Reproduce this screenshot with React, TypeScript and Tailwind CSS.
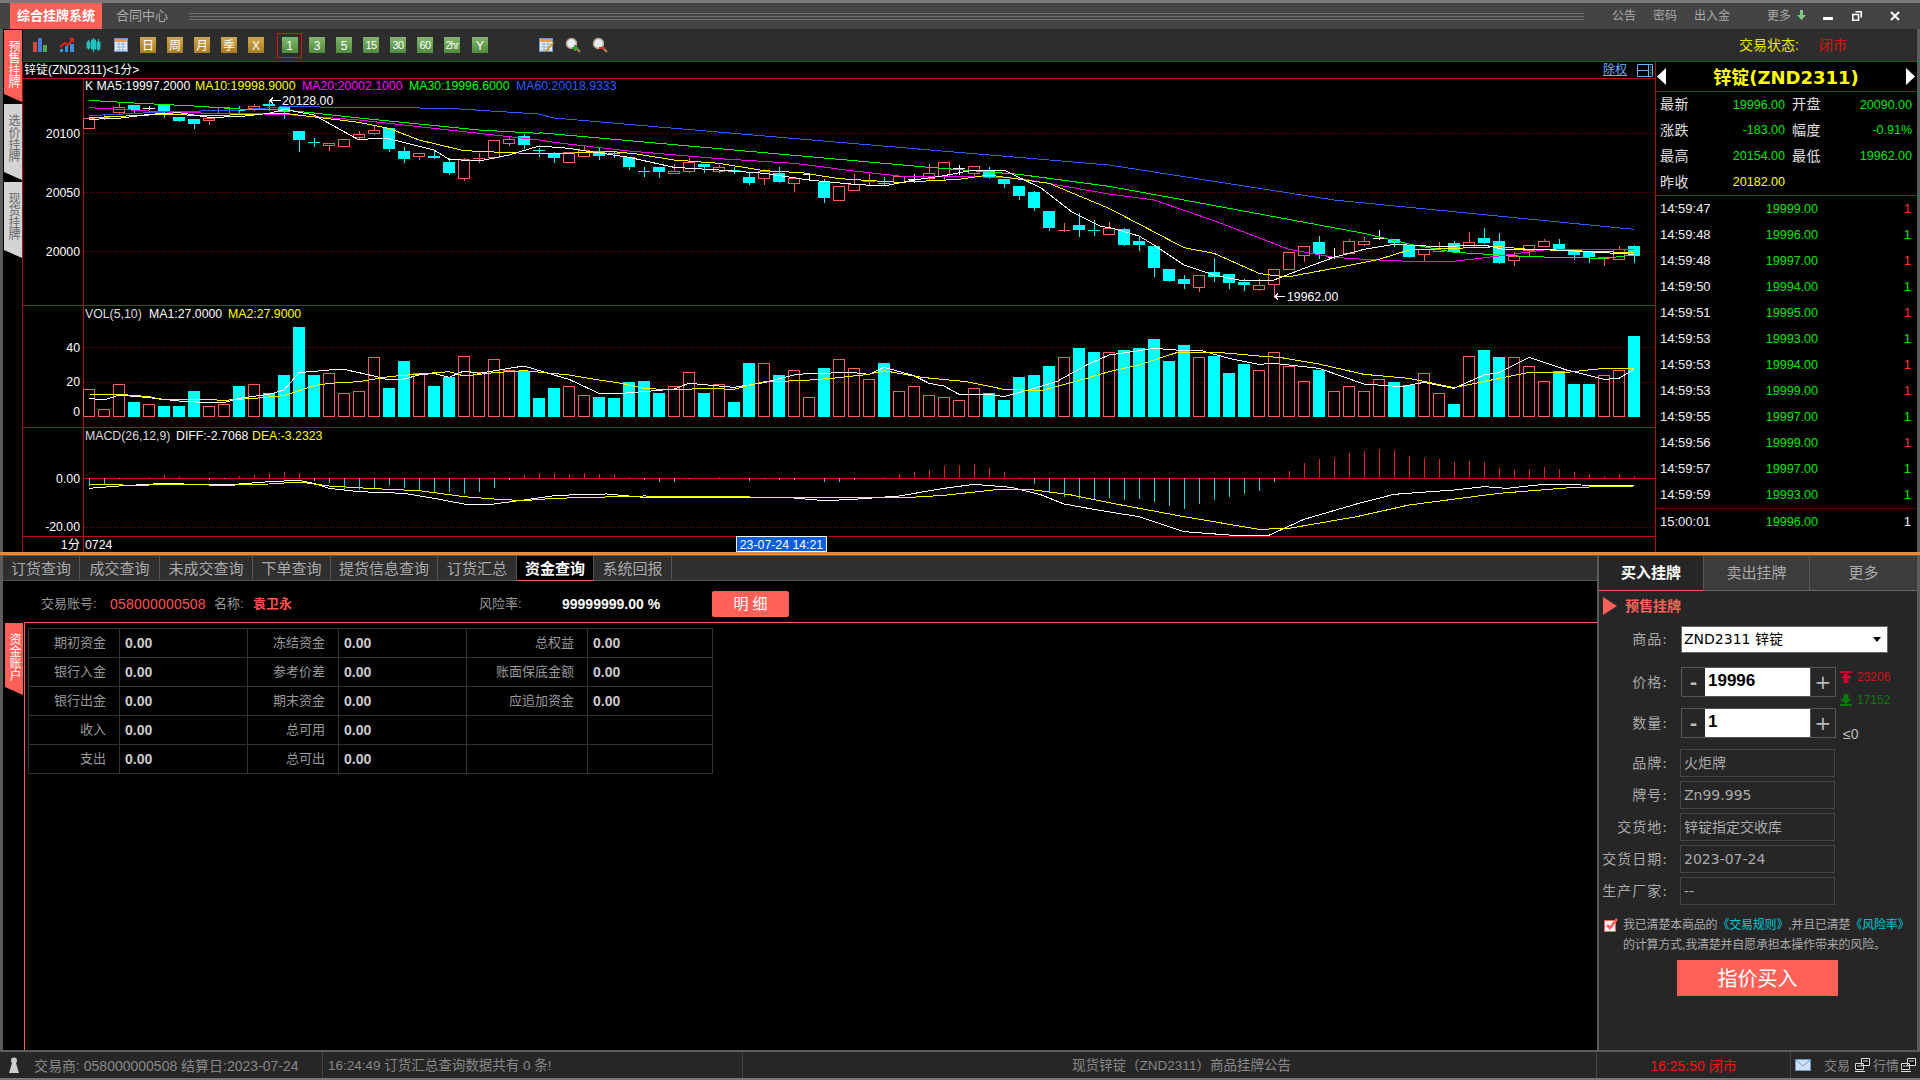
const RED = "#ff5f5f";
const CYAN = "#00ffff";
const GRID = "#b01010";

// [kind, bodyTop, bodyBottom, wickTop, wickBottom], absolute y
const candles: [string, number, number, number, number][] = [
  ["r",118,128,118,128],["r",117,117,115,119],["r",107,112,103,113],["c",105,110,105,113],["w",108,108,106,109],
  ["c",105,111,105,117],["c",117,121,117,121],["c",119,124,119,128],["r",118,120,118,124],["r",107,113,107,113],
  ["c",110,110,106,114],["r",106,108,104,110],["c",104,106,101,110],["c",107,112,107,118],["c",131,140,131,151],
  ["c",142,142,138,146],["r",143,145,143,150],["r",139,146,139,146],["r",134,137,131,138],["r",130,133,126,134],
  ["c",128,149,128,151],["c",151,159,147,162],["r",153,156,153,159],["c",156,158,150,158],["c",162,173,158,174],
  ["r",159,178,158,180],["r",158,158,153,162],["r",140,157,140,158],["r",139,143,136,145],["c",136,145,134,148],
  ["c",150,150,148,156],["c",154,158,152,162],["r",152,162,152,162],["r",150,156,146,156],["c",151,156,147,159],
  ["c",153,153,151,157],["c",157,167,157,169],["c",171,171,167,176],["c",167,172,167,177],["r",171,173,164,173],
  ["r",162,171,158,172],["c",164,167,164,172],["r",167,171,165,172],["c",170,172,167,173],["c",177,183,173,184],
  ["r",171,178,169,184],["c",173,182,167,182],["r",178,183,177,191],["w",174,174,174,179],["c",182,198,179,202],
  ["r",186,200,186,200],["r",184,190,174,190],["r",181,181,174,184],["c",183,184,177,185],["r",176,182,176,182],
  ["w",179,179,174,182],["r",173,178,164,179],["r",162,176,162,179],["w",168,168,165,174],["r",166,173,166,177],
  ["c",170,178,167,178],["c",179,184,179,187],["c",186,196,186,199],["c",192,208,191,210],["c",211,228,211,230],
  ["r",230,230,223,231],["c",225,230,213,236],["c",230,230,220,235],["r",228,234,222,234],["c",229,245,228,245],
  ["c",241,245,237,250],["c",246,268,246,276],["c",269,281,269,281],["c",279,284,275,288],["r",275,287,275,291],
  ["c",272,277,258,281],["c",274,283,274,288],["c",282,285,279,290],["r",285,289,279,290],["r",269,284,269,297],
  ["r",252,269,252,269],["r",246,255,246,261],["c",242,254,236,258],["w",257,257,248,258],["r",241,253,239,253],
  ["r",241,244,237,245],["w",238,238,230,239],["c",239,243,239,246],["c",245,257,245,257],["r",249,254,249,261],
  ["r",248,251,242,251],["c",243,252,241,252],["r",242,247,232,247],["c",238,243,228,243],["c",241,263,233,263],
  ["r",256,260,252,265],["r",245,250,245,255],["r",241,246,239,246],["c",244,249,239,249],["c",250,255,250,259],
  ["c",251,257,251,262],["r",257,258,257,265],["r",249,259,246,259],["c",246,256,245,262],
];

// bar tops in zoom units; negative = hollow red, positive = solid cyan
const volA = [-268,-328,-253,306,-313,318,318,273,-319,-313,258,-253,279,225,81,225,-220,-280,-274,-172,264,183,-220,258,232,-169,-217,-178,-210,214,294,264];
const volB = [-919,-946,951,954,906,903,939,-919,-877,939,-913,966,849,-850,885,-871,-952,864,-838,-865,-898,849,-934,-919,-946,-952,-961,-925,939,960,891,885,858,-832,804,816,-817];
const volC = [450,444,417,483,435,-472,468,519,492,-511,-457,-499,-544,510,-574,-559,-574,-538,546,556,-520,-580,612,-469,450,471,-472,-499,-544,514,552,552,-526,-511,408];
const vols = [
  ...volA.map((v) => [v > 0, 300 + Math.abs(v) / 3] as const),
  ...volB.map((v) => [v > 0, 80 + Math.abs(v) / 3] as const),
  ...volC.map((v) => [v > 0, 200 + Math.abs(v) / 3] as const),
];

const macd = [
  -8,-6,-1,0,1,3,2,0,-2,-1, 2,3,5,6,5,-3,-5,-12,-12,-10, -7,-10,-13,-14,-14,-16,-14,-10,-2,3,
  5,5,4,5,4,4,1,-2,-4,-4, -1,0,1,0,-3,-1,-2,-2,0,-4, -4,-2,0,1,4,6,8,12,13,14,
  10,6,1,-6,-15,-19,-21,-22,-20,-22, -21,-24,-28,-31,-26,-22,-19,-16,-13,-4,
  7,15,19,20,25,27,29,28,22,20, 19,16,17,16,10,8,9,11,9,6, 4,2,4,2,
];

const pts = (base: number, list: number[][]) =>
  list.map(([i, v]) => `${89 + 15 * i},${base + v / 3}`).join(" ");

const maLines = [
  { color: "#2a5cff", points: [
    pts(60, [[0,167],[5,156],[10,150],[13,140],[20,143],[24,145],[30,162]]),
    pts(80, [[31,114],[50,187],[68,255]]),
    pts(200, [[83,0],[103,88]]) ].join(" ") },
  { color: "#00ff00", points: [
    pts(60, [[0,121],[3,129],[7,138],[10,147],[13,150],[15,159],[18,174],[20,183],[26,210],[30,220]]),
    pts(80, [[30,158],[56,262],[62,283],[68,319]]),
    pts(200, [[73,0],[85,100],[88,132],[91,157],[96,170],[101,175],[103,165]]) ].join(" ") },
  { color: "#ff00ff", points: [
    pts(60, [[0,143],[6,158],[13,163],[18,180],[23,205],[27,225],[30,240]]),
    pts(80, [[31,187],[36,213],[42,236],[47,250],[51,273],[54,288],[59,290],[62,295],[68,342]]),
    pts(200, [[71,0],[75,62],[80,148],[83,172],[85,178],[88,184],[91,184],[94,168],[97,150],[103,148]]) ].join(" ") },
  { color: "#ffff00", points: [
    pts(60, [[0,173],[5,163],[8,167],[13,160],[18,187],[20,205],[22,240],[25,272],[28,278],[30,281]]),
    pts(80, [[31,221],[35,215],[36.5,222],[39,240],[42,250],[45,272],[47.5,278],[50,296],[54,307],[58,298],[60,285],[64,310],[68,385]]),
    pts(200, [[70,72],[73,143],[75,160],[78,220],[79,227],[80,230],[83,205],[86,178],[88,150],[91,145],[94,140],[96,148],[103,158]]) ].join(" ") },
  { color: "#ffffff", points: [
    pts(60, [[0,178],[2,175],[4,163],[6,158],[8,172],[10,170],[12,160],[13,148],[15,165],[18,240],[19,235],[20,236],[23,270],[24,298],[26,303],[28,285],[30,258],[32,265]]),
    pts(80, [[33,212],[36,232],[39,262],[42,270],[45,280],[48,300],[51,313],[53,318],[55,300],[57,287],[59,270],[61,270],[63.5,325],[65.5,395],[67.5,440]]),
    pts(200, [[68,82],[70,108],[71,135],[73,195],[75,225],[77,243],[79,240],[81,205],[83,172],[85,148],[87,133],[90,140],[93,135],[94.5,150],[97,148],[101,158],[103,163]]) ].join(" ") },
];

const volLines = [
  { color: "#ffffff", points: [
    pts(300, [[0,295],[1,300],[2,285],[4,293],[6,303],[8,308],[9,308],[10,295],[12,283],[13,270],[14,218],[16,210],[17,208],[19,228],[20,240],[21,237],[22,225],[23,220],[24,232],[25,213],[26,220],[28,205],[29,198],[31,225],[32,238]]),
    pts(80, [[34,940],[35.5,940],[37,935],[39,927],[40,910],[43,922],[45,908],[47,885],[48,880],[51,878],[52,883],[53,862],[55,887],[56,910],[57,918],[58,943],[60,943],[61,950],[63,925],[64.5,905],[66.5,855],[68,825]]),
    pts(200, [[70,452],[71,445],[73,452],[74,450],[76,475],[78,493],[79,490],[82,505],[85,552],[87.5,560],[89,547],[91,565],[93,525],[94,518],[96,472],[98.5,510],[101,538],[102,535],[103,508]]) ].join(" ") },
  { color: "#ffff00", points: [
    pts(300, [[0,282],[2,283],[4,290],[5,300],[7,297],[9,301],[11,295],[13,287],[15,257],[16,250],[18,245],[20,230],[22,222],[24,215],[25,228],[27,218],[29,212],[32,225]]),
    pts(80, [[34,900],[35.5,910],[37,925],[39,930],[41,925],[43,928],[45,905],[47.5,902],[49.5,895],[52,883],[53,872],[55.5,892],[58.5,905],[61,928],[63.5,932],[66.5,895],[68,875]]),
    pts(200, [[70,495],[72.5,458],[75.5,458],[78,468],[79.5,473],[82,492],[85,523],[88,535],[91,563],[96,517],[98.5,517],[101,505],[103,505]]) ].join(" ") },
];

const macdLines = [
  { color: "#ffffff", points: [
    pts(300, [[0,565],[2,558],[5,550],[7,553],[10,552],[12,545],[14,541],[15,550],[16,565],[18,575],[21,580],[23,595],[25,612],[27,612],[29,600],[31,587]]),
    pts(80, [[33,1243],[34.5,1242],[37,1252],[40,1253],[44,1252],[47,1254],[49,1262],[51,1258],[54,1248],[57,1225],[59,1213],[61.5,1222],[63.5,1245],[65,1272],[67.5,1292]]),
    pts(200, [[70,950],[73,995],[76,1005],[78.7,1005],[81,958],[84.5,912],[87,883],[91,870],[93,860],[94.5,865],[97,853],[99.5,855],[103,858]]) ].join(" ") },
  { color: "#ffff00", points: [
    pts(300, [[0,552],[3,556],[6,553],[9,556],[12,552],[14,546],[16,558],[19,566],[22,572],[25,590],[27,597],[29,602],[31,595]]),
    pts(80, [[37,1248],[42,1250],[48,1253],[54,1254],[57,1246],[60.5,1229],[63,1230],[65.5,1245],[68,1268]]),
    pts(200, [[73,950],[78,988],[80,985],[84.5,950],[88,915],[94,880],[99,862],[103,858]]) ].join(" ") },
];

function KChart() {
  return (
    <svg width={1633} height={473} viewBox="23 79 1633 473" className="block">
      {[133, 192, 251, 347, 382, 527].map((y) => (
        <line key={y} x1={84} x2={1656} y1={y + 0.5} y2={y + 0.5} stroke="#a00000" strokeDasharray="1 2" />
      ))}
      <g shapeRendering="crispEdges">
        {[305, 427, 536].map((y) => (
          <line key={y} x1={23} x2={1656} y1={y + 0.5} y2={y + 0.5} stroke={GRID} />
        ))}
        <line x1={83.5} x2={83.5} y1={79} y2={552} stroke={GRID} />
        <line x1={84} x2={1656} y1={478.5} y2={478.5} stroke="#d00000" />

        {candles.map(([k, top, bot, wt, wb], i) => {
          const c = 89 + 15 * i;
          const col = k === "r" ? RED : k === "c" ? CYAN : "#ffffff";
          return (
            <g key={i}>
              <line x1={c + 0.5} x2={c + 0.5} y1={wt} y2={wb + 1} stroke={col} />
              {top === bot ? (
                <line x1={c - 6} x2={c + 6} y1={top + 0.5} y2={top + 0.5} stroke={col} />
              ) : k === "c" ? (
                <rect x={c - 6} y={top} width={12} height={bot - top} fill={CYAN} />
              ) : (
                <rect x={c - 5.5} y={top + 0.5} width={11} height={bot - top} fill="#000" stroke={RED} />
              )}
            </g>
          );
        })}
        {maLines.map((l) => (
          <polyline key={l.color} points={l.points} fill="none" stroke={l.color} />
        ))}

        {vols.map(([solid, top], i) => {
          const c = 89 + 15 * i;
          return solid ? (
            <rect key={i} x={c - 6} y={top} width={12} height={417 - top} fill={CYAN} />
          ) : (
            <rect key={i} x={c - 5.5} y={top + 0.5} width={11} height={416 - top} fill="none" stroke={RED} />
          );
        })}
        {volLines.map((l) => (
          <polyline key={l.color} points={l.points} fill="none" stroke={l.color} />
        ))}

        {macd.map((v, i) => {
          if (v === 0) return null;
          const c = 89 + 15 * i + 0.5;
          return <line key={i} x1={c} x2={c} y1={478} y2={478 - v} stroke={v > 0 ? "#e02020" : "#20d0d8"} />;
        })}
        {macdLines.map((l) => (
          <polyline key={l.color} points={l.points} fill="none" stroke={l.color} />
        ))}

        <path d="M270 100.5h11M273 97.5l-3 3 3 3" fill="none" stroke="#fff" />
        <path d="M1275 296.5h10M1278 293.5l-3 3 3 3" fill="none" stroke="#fff" />
        <rect x={736.5} y={536.5} width={90} height={15} fill="#0a5ce0" stroke="#fff" />
      </g>

      <g className="text-[12.3px]" dominantBaseline="central">
        <text x={85} y={86} fill="#fff">K MA5:19997.2000</text>
        <text x={195} y={86} fill="#ffff00">MA10:19998.9000</text>
        <text x={302} y={86} fill="#ff00ff">MA20:20002.1000</text>
        <text x={409} y={86} fill="#00ff00">MA30:19996.6000</text>
        <text x={516} y={86} fill="#2a5cff">MA60:20018.9333</text>
        <text x={85} y={314} fill="#ddd">VOL(5,10)</text>
        <text x={149} y={314} fill="#fff">MA1:27.0000</text>
        <text x={228} y={314} fill="#ffff00">MA2:27.9000</text>
        <text x={85} y={436} fill="#ddd">MACD(26,12,9)</text>
        <text x={176} y={436} fill="#fff">DIFF:-2.7068</text>
        <text x={252} y={436} fill="#ffff00">DEA:-3.2323</text>
        <text x={282} y={101} fill="#fff">20128.00</text>
        <text x={1287} y={297} fill="#fff">19962.00</text>
        <text x={85} y={545} fill="#fff">0724</text>
        <text x={781.5} y={545} fill="#fff" textAnchor="middle">23-07-24 14:21</text>
        <g textAnchor="end" fill="#fff">
          <text x={80} y={134}>20100</text>
          <text x={80} y={193}>20050</text>
          <text x={80} y={252}>20000</text>
          <text x={80} y={348}>40</text>
          <text x={80} y={382}>20</text>
          <text x={80} y={412}>0</text>
          <text x={80} y={479}>0.00</text>
          <text x={80} y={527}>-20.00</text>
          <text x={80} y={545}>1分</text>
        </g>
      </g>
    </svg>
  );
}

function BarsIcon() {
  return (
    <svg width={16} height={16} viewBox="0 0 16 16">
      <rect x={1} y={5} width={4} height={10} fill="#d84a3a" />
      <rect x={6} y={1} width={4} height={14} fill="#4a78d8" />
      <rect x={11} y={8} width={4} height={7} fill="#4ea84a" />
    </svg>
  );
}

function TrendIcon() {
  return (
    <svg width={16} height={16} viewBox="0 0 16 16">
      <path d="M1 15v-3h3v3zM6 15V9h3v6zM11 15V7h4v8z" fill="#3a90e0" />
      <path d="M1 10l5-4 3 2 5-6" fill="none" stroke="#f02020" strokeWidth={2} />
      <path d="M10 1h5v5z" fill="#f02020" />
    </svg>
  );
}

function CandleIcon() {
  return (
    <svg width={16} height={16} viewBox="0 0 16 16" fill="#20c0c0" stroke="#20c0c0">
      <path d="M2.5 3v10M7.5 1v14M12.5 2v12" fill="none" />
      <rect x={1} y={5} width={3} height={6} />
      <rect x={5.5} y={3} width={4} height={9} />
      <rect x={11} y={5} width={3} height={7} />
    </svg>
  );
}

function CalIcon({ pencil }: { pencil?: boolean }) {
  return (
    <svg width={16} height={16} viewBox="0 0 16 16">
      <rect x={1.5} y={1.5} width={13} height={13} fill="#eef4fb" stroke="#6f94c8" />
      <rect x={2} y={2} width={12} height={3} fill="#e89a50" />
      <path d="M3 7h10M3 10h10M3 13h10M6 5v9M10 5v9" stroke="#8fb0d8" />
      {pencil && <path d="M15 5l1 1-7 8-2 1 1-2z" fill="#e8b030" stroke="#a06a10" strokeWidth={0.5} />}
    </svg>
  );
}

function ZoomIcon({ plus }: { plus?: boolean }) {
  return (
    <svg width={16} height={16} viewBox="0 0 16 16">
      <circle cx={6.5} cy={6.5} r={5} fill="#e8eef4" stroke="#b8a890" strokeWidth={1.5} />
      <path d="M10 10l5 5" stroke="#b08a50" strokeWidth={2} />
      <path d={plus ? "M7 11h6M10 8v6" : "M7 11h6"} stroke={plus ? "#30a030" : "#d83030"} strokeWidth={2} />
    </svg>
  );
}

function PeriodBtn({ text, gold, size }: { text: string; gold?: boolean; size?: string }) {
  return (
    <div
      className={`w-[16px] h-[16px] shrink-0 flex items-center justify-center text-white border-t border-[#ffffff50] bg-linear-to-b ${
        gold ? "from-[#d0a445] to-[#a87c22]" : "from-[#7fb568] to-[#4f8a3e]"
      } ${size ?? "text-[12px]"}`}
    >
      {text}
    </div>
  );
}

function SideTab({ text, active, h }: { text: string; active?: boolean; h: string }) {
  return (
    <div
      className={`w-[18px] ${h} ml-[1px] flex items-center pt-[10px] text-[12px] leading-[12px] [writing-mode:vertical-rl] [clip-path:polygon(0_0,100%_0,100%_100%,0_calc(100%-8px))] ${
        active ? "bg-[#ff6159] text-white" : "bg-[#d4d4d4] text-[#666]"
      }`}
    >
      {text}
    </div>
  );
}

const stats = [
  ["最新", "19996.00", "开盘", "20090.00"],
  ["涨跌", "-183.00", "幅度", "-0.91%"],
  ["最高", "20154.00", "最低", "19962.00"],
];

const ticks = [
  ["14:59:47", "19999.00", "r"],
  ["14:59:48", "19996.00", "g"],
  ["14:59:48", "19997.00", "r"],
  ["14:59:50", "19994.00", "g"],
  ["14:59:51", "19995.00", "r"],
  ["14:59:53", "19993.00", "g"],
  ["14:59:53", "19994.00", "r"],
  ["14:59:53", "19999.00", "r"],
  ["14:59:55", "19997.00", "g"],
  ["14:59:56", "19999.00", "r"],
  ["14:59:57", "19997.00", "g"],
  ["14:59:59", "19993.00", "g"],
];

function TickRow({ t, muted }: { t: string[]; muted?: boolean }) {
  return (
    <div className="h-[26px] flex items-center pl-[4px] text-[13px]">
      <span className="w-[89px] text-[#f0f0f0]">{t[0]}</span>
      <span className="w-[69px] text-right text-[#00e600] text-[12.5px]">{t[1]}</span>
      <span
        className={`w-[93px] text-right ${
          muted ? "text-[#f0f0f0]" : t[2] === "r" ? "text-[#ff3030]" : "text-[#00e600]"
        }`}
      >
        1
      </span>
    </div>
  );
}

function InfoPanel() {
  return (
    <div className="w-[261px] border-l border-[#b01010] bg-black flex flex-col">
      <div className="h-[30px] border-b border-[#b01010] flex items-center justify-between px-[1px]">
        <svg width={10} height={17} viewBox="0 0 10 17"><path d="M9 0v17L0 8.5z" fill="#fff" /></svg>
        <span className="pt-[2px] [font-family:'DejaVu_Sans','Noto_Sans_CJK_SC',sans-serif] font-bold text-[18px] text-[#ffff00]">
          锌锭(ZND2311)
        </span>
        <svg width={10} height={17} viewBox="0 0 10 17"><path d="M1 0v17l9-8.5z" fill="#fff" /></svg>
      </div>
      <div className="h-[104px] border-b border-[#b01010] flex flex-col">
        {stats.map((s) => (
          <div key={s[0]} className="h-[26px] flex items-center pl-[4px]">
            <span className="w-[29px] text-[14px] tracking-[0.5px] text-[#e0e0e0] whitespace-nowrap">{s[0]}</span>
            <span className="w-[96px] text-right text-[12.5px] text-[#00e600]">{s[1]}</span>
            <span className="w-[29px] ml-[7px] text-[14px] tracking-[0.5px] text-[#e0e0e0] whitespace-nowrap">{s[2]}</span>
            <span className="w-[91px] text-right text-[12.5px] text-[#00e600]">{s[3]}</span>
          </div>
        ))}
        <div className="h-[26px] flex items-center pl-[4px]">
          <span className="w-[29px] text-[14px] tracking-[0.5px] text-[#e0e0e0] whitespace-nowrap">昨收</span>
          <span className="w-[96px] text-right text-[12.5px] text-[#ffff00]">20182.00</span>
        </div>
      </div>
      {ticks.map((t, i) => (
        <TickRow key={i} t={t} />
      ))}
      <div className="border-t border-dotted border-[#a00000]" />
      <TickRow t={["15:00:01", "19996.00", "w"]} muted />
    </div>
  );
}

function Toolbar() {
  const twoDigit = "text-[11px] tracking-[-0.5px]";
  return (
    <div className="h-[32px] bg-[#2d2d2d] flex items-center pl-[9px]">
      <div className="flex items-center gap-[11px]">
        <BarsIcon />
        <TrendIcon />
        <CandleIcon />
        <CalIcon />
        {["日", "周", "月", "季", "X"].map((t) => (
          <PeriodBtn key={t} text={t} gold />
        ))}
      </div>
      <div className="ml-[13px] w-[25px] h-[25px] border border-[#e01010] flex items-center justify-center">
        <PeriodBtn text="1" />
      </div>
      <div className="ml-[7px] flex items-center gap-[11px]">
        <PeriodBtn text="3" />
        <PeriodBtn text="5" />
        <PeriodBtn text="15" size={twoDigit} />
        <PeriodBtn text="30" size={twoDigit} />
        <PeriodBtn text="60" size={twoDigit} />
        <PeriodBtn text="2hr" size="text-[10px] tracking-[-0.5px]" />
      </div>
      <div className="ml-[12px]">
        <PeriodBtn text="Y" />
      </div>
      <div className="ml-[50px] flex items-center gap-[11px]">
        <CalIcon pencil />
        <ZoomIcon plus />
        <ZoomIcon />
      </div>
      <span className="ml-[1131px] text-[14px] text-[#e8e800] whitespace-nowrap">交易状态:</span>
      <span className="ml-[20px] text-[14px] text-[#e01010]">闭市</span>
    </div>
  );
}

function TitleBar() {
  return (
    <div className="h-[29px] shrink-0 border-t-[3px] border-[#7a7a7a] bg-[#444] flex items-center text-[12px] text-[#aaa]">
      <div className="ml-[10px] w-[92px] h-full bg-[#ff6159] text-white font-bold text-[13px] flex items-center justify-center whitespace-nowrap">
        综合挂牌系统
      </div>
      <span className="ml-[14px] w-[52px] text-[13px] whitespace-nowrap">合同中心</span>
      <div className="ml-[21px] w-[1395px] flex flex-col gap-[2px]">
        <div className="h-px bg-[#707070]" />
        <div className="h-px bg-[#707070]" />
        <div className="h-px bg-[#707070]" />
      </div>
      <span className="ml-[28px] whitespace-nowrap">公告</span>
      <span className="ml-[17px] whitespace-nowrap">密码</span>
      <span className="ml-[17px] whitespace-nowrap">出入金</span>
      <span className="ml-[37px] whitespace-nowrap">更多</span>
      <svg className="ml-[6px] -mt-[3px]" width={9} height={10} viewBox="0 0 9 10"><path d="M3 0h3v5h3l-4.500 5L0 5h3z" fill="#7fc87f" /></svg>
      <svg className="ml-[17px]" width={10} height={10} viewBox="0 0 10 10"><rect y={6} width={10} height={3} fill="#fff" /></svg>
      <svg className="ml-[19px]" width={10} height={10} viewBox="0 0 10 10"><path d="M3.500.8h5.700v5.700M.8 3.500h5.700v5.700H.8z" fill="none" stroke="#fff" strokeWidth={1.600} /></svg>
      <svg className="ml-[28px]" width={10} height={10} viewBox="0 0 10 10"><path d="M1 1l8 8M9 1l-8 8" stroke="#fff" strokeWidth={2} /></svg>
    </div>
  );
}

function UpperSection() {
  return (
    <div className="h-[523px] shrink-0 mx-[3px] flex">
      <div className="w-[20px] bg-black flex flex-col gap-[2px] pt-[1px]">
        <SideTab text="预售挂牌" active h="h-[72px]" />
        <SideTab text="选价挂牌" h="h-[76px]" />
        <SideTab text="现货挂牌" h="h-[76px]" />
      </div>
      <div className="flex-1 flex flex-col">
        <Toolbar />
        <div className="flex-1 flex border-t border-[#b01010] bg-black">
          <div className="w-[1633px] border-l border-[#a01010] -ml-px">
            <div className="h-[17px] border-b border-[#b01010] flex items-center text-[12px] text-white pl-[1px]">
              <span className="whitespace-nowrap">锌锭(ZND2311)&lt;1分&gt;</span>
              <span className="ml-auto underline text-[#70b0ff]">除权</span>
              <svg className="ml-[10px] mr-[2px]" width={16} height={13} viewBox="0 0 16 13">
                <path d="M.5.5h15v12H.5zM.5 6.500h11M11.500.5v12M13 3h1.500M13 6h1.500M13 9h1.500" fill="none" stroke="#70b0ff" />
              </svg>
            </div>
            <KChart />
          </div>
          <InfoPanel />
        </div>
      </div>
    </div>
  );
}

const queryTabs = [
  ["订货查询", "w-[77px]"],
  ["成交查询", "w-[80px]"],
  ["未成交查询", "w-[93px]"],
  ["下单查询", "w-[78px]"],
  ["提货信息查询", "w-[107px]"],
  ["订货汇总", "w-[79px]"],
  ["资金查询", "w-[77px]"],
  ["系统回报", "w-[78px]"],
];

const fundRows = [
  ["期初资金", "0.00", "冻结资金", "0.00", "总权益", "0.00"],
  ["银行入金", "0.00", "参考价差", "0.00", "账面保底金额", "0.00"],
  ["银行出金", "0.00", "期末资金", "0.00", "应追加资金", "0.00"],
  ["收入", "0.00", "总可用", "0.00", "", ""],
  ["支出", "0.00", "总可出", "0.00", "", ""],
];

function FundsPanel() {
  const lbl = "border border-[#333] text-right pr-[13px] text-[13px] text-[#999]";
  const val = "border border-[#333] pl-[5px] text-[14px] font-bold text-[#ccc]";
  return (
    <div className="w-[1594px] bg-black flex flex-col">
      <div className="h-[25px] bg-[#2f2f2f] border-b border-[#555] flex text-[15px] text-[#aaa]">
        {queryTabs.map(([t, w]) => (
          <div
            key={t}
            className={`${w} h-[25px] shrink-0 flex items-center justify-center pt-[2px] whitespace-nowrap border-r border-[#555] ${
              t === "资金查询" ? "bg-black text-white font-bold border-b border-b-[#ff6159]" : ""
            }`}
          >
            {t}
          </div>
        ))}
      </div>
      <div className="h-[41px] flex items-center pl-[38px] pt-[5px] text-[13px] text-[#999]">
        <span className="w-[69px] whitespace-nowrap">交易账号:</span>
        <span className="w-[104px] text-[14px] tracking-[0.2px] text-[#ff5050]">058000000508</span>
        <span className="w-[39px] whitespace-nowrap">名称:</span>
        <span className="w-[226px] text-[#ff5050] font-bold">袁卫永</span>
        <span className="w-[83px] whitespace-nowrap">风险率:</span>
        <span className="w-[150px] text-[14px] font-bold text-white whitespace-nowrap">99999999.00 %</span>
        <button className="w-[77px] h-[26px] rounded-[2px] bg-[#ff6159] text-white text-[15px]">明 细</button>
      </div>
      <div className="flex-1 flex">
        <div className="w-[21px] pt-[1px] pl-[2px]">
          <div className="w-[18px] h-[72px] bg-[#ff6159] text-white text-[12px] leading-[12px] flex items-center pt-[10px] [writing-mode:vertical-rl] [clip-path:polygon(0_0,100%_0,100%_100%,0_calc(100%-8px))]">
            资金账户
          </div>
        </div>
        <div className="flex-1 border-l border-t border-[#ff6159] pl-[3px] pt-[5px]">
          <table className="table-fixed w-[684px] border-collapse">
            <colgroup>
              <col className="w-[91px]" />
              <col className="w-[128px]" />
              <col className="w-[91px]" />
              <col className="w-[128px]" />
              <col className="w-[121px]" />
              <col className="w-[125px]" />
            </colgroup>
            <tbody>
              {fundRows.map((r) => (
                <tr key={r[0]} className="h-[29px]">
                  <td className={lbl}>{r[0]}</td>
                  <td className={val}>{r[1]}</td>
                  <td className={lbl}>{r[2]}</td>
                  <td className={val}>{r[3]}</td>
                  <td className={lbl}>{r[4]}</td>
                  <td className={val}>{r[5]}</td>
                </tr>
              ))}
            </tbody>
          </table>
        </div>
      </div>
    </div>
  );
}

function Stepper({ value }: { value: string }) {
  return (
    <div className="w-[155px] h-[30px] border border-[#555] flex text-[#bbb]">
      <div className="w-[23px] flex items-center justify-center text-[18px] font-bold">-</div>
      <div className="w-[105px] bg-white text-black text-[17px] font-bold pl-[3px] leading-[26px] [font-family:'Liberation_Sans',sans-serif]">
        {value}
      </div>
      <div className="flex-1 flex items-center justify-center text-[20px] border-l border-[#555]">+</div>
    </div>
  );
}

function FieldRow({ label, value }: { label: string; value: string }) {
  return (
    <div className="h-[28px] mb-[4px] flex items-center">
      <span className="w-[69px] text-right text-[14px] tracking-[1px] text-[#aaa] whitespace-nowrap">{label}:</span>
      <div className="ml-[12px] w-[155px] h-[28px] border border-[#444] flex items-center pl-[3px] text-[14px] text-[#aaa] whitespace-nowrap">
        {value}
      </div>
    </div>
  );
}

function BuyPanel() {
  const lbl = "w-[69px] text-right text-[14px] tracking-[1px] text-[#aaa] whitespace-nowrap";
  return (
    <div className="w-[318px] bg-[#262626] flex flex-col [font-family:'DejaVu_Sans','Noto_Sans_CJK_SC',sans-serif]">
      <div className="h-[35px] shrink-0 flex text-[15px] text-[#aaa] [font-family:'Liberation_Sans','Noto_Sans_CJK_SC',sans-serif]">
        <div className="w-[105px] flex items-center justify-center font-bold text-white border-b border-[#ff6159] border-r border-r-[#555]">买入挂牌</div>
        <div className="w-[106px] flex items-center justify-center bg-[#3c3c3c] border-b border-[#666] border-r border-r-[#555]">卖出挂牌</div>
        <div className="flex-1 flex items-center justify-center bg-[#3c3c3c] border-b border-[#666]">更多</div>
      </div>
      <div className="h-[30px] shrink-0 flex items-center pl-[4px]">
        <svg width={14} height={18} viewBox="0 0 14 18"><path d="M0 0l14 9-14 9z" fill="#ff6159" /></svg>
        <span className="ml-[8px] -mt-[2px] text-[14px] font-bold text-[#ff6159] [font-family:'Noto_Sans_CJK_SC',sans-serif]">预售挂牌</span>
      </div>
      <div className="mt-[5px] h-[27px] flex items-center">
        <span className={lbl}>商品:</span>
        <div className="ml-[13px] w-[207px] h-[27px] bg-white border border-[#666] flex items-center pl-[2px] pr-[6px] text-[14px] text-black whitespace-nowrap">
          ZND2311 锌锭
          <svg className="ml-auto" width={8} height={5} viewBox="0 0 8 5"><path d="M0 0h8L4 5z" fill="#000" /></svg>
        </div>
      </div>
      <div className="mt-[14px] h-[71px] flex">
        <div className="flex flex-col gap-[11px]">
          <div className="flex items-center">
            <span className={lbl}>价格:</span>
            <div className="ml-[13px]"><Stepper value="19996" /></div>
          </div>
          <div className="flex items-center">
            <span className={lbl}>数量:</span>
            <div className="ml-[13px]"><Stepper value="1" /></div>
          </div>
        </div>
        <div className="ml-[4px] flex flex-col text-[12px] [font-family:'Liberation_Sans',sans-serif]">
          <div className="h-[20px] mt-[1px] flex items-center gap-[5px] text-[#d01020]">
            <svg width={12} height={12} viewBox="0 0 12 12"><path d="M0 0h12v2H0zM6 2l6 5H8.500v5h-5V7H0z" fill="#d00030" /></svg>
            23206
          </div>
          <div className="h-[20px] mt-[5px] flex items-center gap-[5px] text-[#0a7a0a]">
            <svg width={12} height={12} viewBox="0 0 12 12"><path d="M0 10h12v2H0zM3.500 0h5v5H12L6 10 0 5h3.500z" fill="#0a7a0a" /></svg>
            17152
          </div>
          <div className="mt-[15px] pl-[3px] text-[14px] leading-[20px] text-[#bbb]">≤0</div>
        </div>
      </div>
      <div className="mt-[11px]">
        <FieldRow label="品牌" value="火炬牌" />
        <FieldRow label="牌号" value="Zn99.995" />
        <FieldRow label="交货地" value="锌锭指定交收库" />
        <FieldRow label="交货日期" value="2023-07-24" />
        <FieldRow label="生产厂家" value="--" />
      </div>
      <div className="mt-[6px] pl-[5px] flex text-[12px] leading-[20px] text-[#aaa] [font-family:'Liberation_Sans','Noto_Sans_CJK_SC',sans-serif]">
        <svg className="mt-[3px] shrink-0" width={16} height={14} viewBox="0 0 16 14">
          <rect x={.5} y={2.500} width={11} height={11} fill="#fff" stroke="#ff6159" />
          <path d="M3 7l3 3 7-9" fill="none" stroke="#ff6159" strokeWidth={2.500} />
        </svg>
        <div className="ml-[3px] tracking-[-0.2px]">
          <div className="whitespace-nowrap">
            我已清楚本商品的<span className="text-[#00c8d8]">《交易规则》</span>,并且已清楚<span className="text-[#00c8d8]">《风险率》</span>
          </div>
          <div className="whitespace-nowrap">的计算方式,我清楚并自愿承担本操作带来的风险。</div>
        </div>
      </div>
      <button className="mt-[5px] ml-[78px] w-[161px] h-[36px] pt-[2px] bg-[#ff6159] text-white text-[20px] [font-family:'Liberation_Sans','Noto_Sans_CJK_SC',sans-serif]">
        指价买入
      </button>
    </div>
  );
}

function NetIcon() {
  return (
    <svg className="block" width={15} height={15} viewBox="0 0 15 15">
      <path d="M6.500.5h8v7h-8zM.5 5.500h8v6h-8z" fill="#111" stroke="#ddd" />
      <path d="M2 8h5M8 3h5M0 13.500h10" stroke="#ddd" />
    </svg>
  );
}

function StatusBar() {
  return (
    <div className="h-[30px] shrink-0 border-t-2 border-b-2 border-[#5c5c5c] border-b-[#777] bg-[#262626] flex text-[14px] text-[#888] pl-[3px]">
      <div className="w-[320px] border-r border-[#444] flex items-center pl-[6px] whitespace-nowrap">
        <svg width={10} height={16} viewBox="0 0 10 16" className="shrink-0">
          <circle cx={5} cy={3.500} r={3} fill="#ccc" />
          <path d="M3 6h4l3 10H0z" fill="#ccc" />
        </svg>
        <span className="ml-[15px] pt-[2px]">交易商: 058000000508 结算日:2023-07-24</span>
      </div>
      <div className="w-[420px] border-r border-[#444] flex items-center pl-[5px] pt-[2px] text-[13.5px] whitespace-nowrap">
        16:24:49 订货汇总查询数据共有 0 条!
      </div>
      <div className="w-[854px] border-r border-[#444] flex items-center justify-center pl-[24px] pt-[2px] text-[13.5px] whitespace-nowrap">
        现货锌锭（ZND2311）商品挂牌公告
      </div>
      <div className="w-[194px] border-r border-[#444] flex items-center justify-center pt-[2px] text-[#ff1010] whitespace-nowrap">
        16:25:50 闭市
      </div>
      <div className="flex-1 flex items-center pl-[4px] text-[13px] whitespace-nowrap">
        <svg width={16} height={12} viewBox="0 0 16 12">
          <rect x={.5} y={.5} width={15} height={11} fill="#cfe0f8" stroke="#6f94c8" />
          <path d="M1 1l7 6 7-6" fill="none" stroke="#6f94c8" />
        </svg>
        <span className="ml-[13px] pt-[2px]">交易</span>
        <span className="ml-[5px]"><NetIcon /></span>
        <span className="ml-[3px] pt-[2px]">行情</span>
        <span className="ml-[2px]"><NetIcon /></span>
      </div>
    </div>
  );
}

export default function App() {
  return (
    <div className="w-[1920px] h-[1080px] overflow-hidden bg-[#5c5c5c] flex flex-col [font-family:'Liberation_Sans','Noto_Sans_CJK_SC',sans-serif]">
      <TitleBar />
      <UpperSection />
      <div className="h-[3px] shrink-0 bg-[#f08a30]" />
      <div className="h-[494px] shrink-0 mt-px ml-[3px] flex gap-[2px]">
        <FundsPanel />
        <BuyPanel />
      </div>
      <StatusBar />
    </div>
  );
}
